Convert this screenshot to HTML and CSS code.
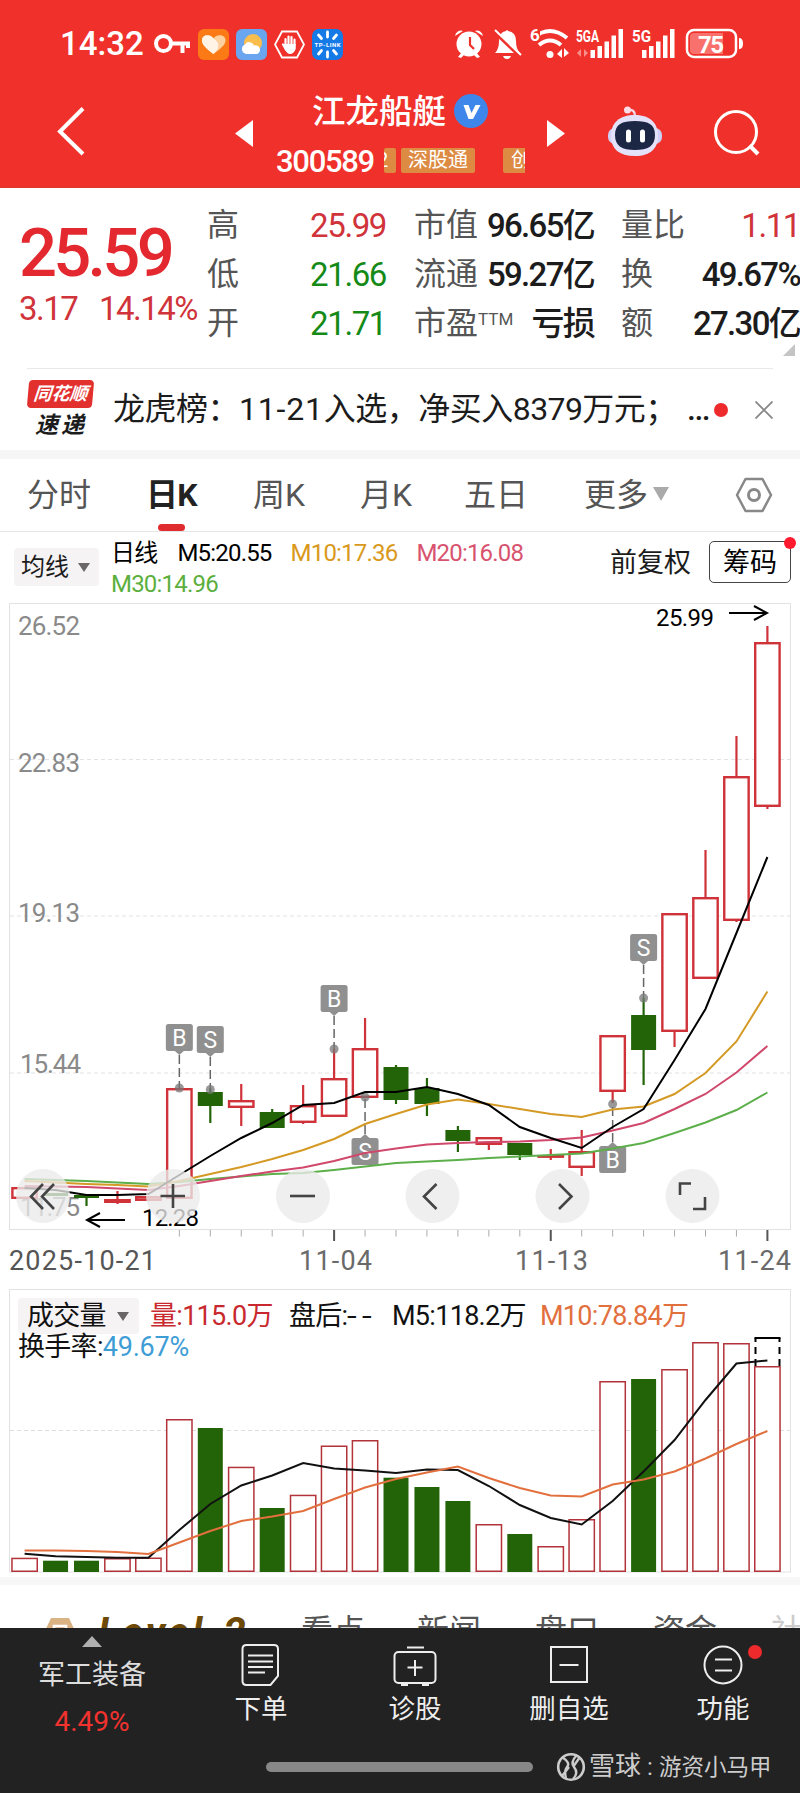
FILE: index.html
```html
<!DOCTYPE html>

<html lang="zh-CN">
    <head>
        <meta charset="utf-8" />
        <meta name="viewport" content="width=device-width, initial-scale=1.0">
        <title>江龙船艇</title>
        <link rel="stylesheet" href="styles.css">
    </head>
    <body>
        <div class="wrap">
            <div class="header">
                <div class="status">
                    <span class="time">14:32</span>
                    <svg class="s-key" width="36" height="31" viewBox="0 0 36 31">
                        <circle cx="9.500" cy="14.500" r="7.500" fill="none" stroke="#fff" stroke-width="4"/>
                        <path d="M17 14.500H36M28.500 15v9M34 15v4" fill="none" stroke="#fff" stroke-width="4"/>
                    </svg>
                    <svg class="s-app" width="31" height="31" viewBox="0 0 31 31">
                        <rect width="31" height="31" rx="6" fill="#fb7a16"/>
                        <path d="M15.500 25C9 20 4 16 4 11.500 4 5.500 12 4.500 15.500 9.500 19 4.500 27.500 5.500 27.500 11.500 27.500 16 22 20 15.500 25Z" fill="#fdd0a0"/>
                        <path d="M15.500 25C9 20 4 16 4 11.500 4 5.500 12 4.500 15.500 9.500 20 13 22 16 19 21Z" fill="#fff4e6"/>
                    </svg>
                    <svg class="s-app" width="31" height="31" viewBox="0 0 31 31">
                        <rect width="31" height="31" rx="6" fill="#6aa5ef"/>
                        <circle cx="17" cy="14" r="9" fill="#fbbd4c"/>
                        <path d="M10 25a5 5 0 0 1-1-9.500 5 5 0 0 1 9 1 4.500 4.500 0 0 1 3 8.500Z" fill="#fff"/>
                    </svg>
                    <svg class="s-app" width="31" height="31" viewBox="0 0 31 31">
                        <path d="M8 2.500H23L30 15.500 23 28.500H8L1 15.500Z" fill="none" stroke="#fff" stroke-width="1.800"/>
                        <path d="M11.500 17V10M14.500 16V7.500M17.500 16V8M20.500 17V10.500M9 15.500l3 5" fill="none" stroke="#fff" stroke-width="2.200" stroke-linecap="round"/>
                        <path d="M10.500 15h11.200v5q-2 5-5.700 5-3 0-5.500-5Z" fill="#fff"/>
                    </svg>
                    <svg class="s-app" width="31" height="31" viewBox="0 0 31 31">
                        <rect width="31" height="31" rx="7" fill="#1579e6"/>
                        <path d="M15.500 3v5M15.500 23v5M6.500 6l3 3.500M24.500 6l-3 3.500M6.500 25l3-3.500M24.500 25l-3-3.500" stroke="#fff" stroke-width="2.800" stroke-linecap="round"/>
                        <text x="15.500" y="17.800" class="tp" textLength="26">TP-LINK</text>
                    </svg>
                    <svg class="s-right" width="290" height="34" viewBox="453 27 290 34">
                        <g fill="#fff">
                            <circle cx="468" cy="44" r="12.500"/>
                            <path d="M454 36a6 6 0 0 1 8-5ZM482 36a6 6 0 0 0-8-5ZM457 57l4-5 3 2-4 4ZM479 57l-4-5-3 2 4 4Z"/>
                            <path d="M494 53q4-4 4-12 0-9 7-10 1-2 2 0 8 1 8 10 0 8 4 12ZM502 56h8q-1 3-4 3t-4-3Z"/>
                            <circle cx="549" cy="54.500" r="3.500"/>
                            <path d="M556 54l5-5v9ZM568 53l-5-5v9Z"/>
                            <path d="M589.500 50h4.500v8h-4.500ZM596.500 46h4.500v12h-4.500ZM603.500 41.500h4.500v16.500h-4.500ZM610.500 35.500h4.500v22.500h-4.500ZM617.500 29h4.500v29h-4.500Z"/>
                            <path d="M641 50h4.500v8h-4.500ZM648 46h4.500v12h-4.500ZM655 41.500h4.500v16.500h-4.500ZM662 35.500h4.500v22.500h-4.500ZM669 29h4.500v29h-4.500Z"/>
                            <path d="M738 38q4 0 4 5.500T738 49Z"/>
                        </g>
                        <path d="M576 53l4-4v8ZM587 53l-4-4v8Z" fill="#f98d88"/>
                        <path d="M469 37v8l4 4" fill="none" stroke="#ef312b" stroke-width="2.200"/>
                        <path d="M493 31l27 26" stroke="#ef312b" stroke-width="4"/>
                        <path d="M494 30l26 25" stroke="#fff" stroke-width="2"/>
                        <path d="M532 38q17-14 34 0M538 45q11-9 22 0" fill="none" stroke="#fff" stroke-width="4"/>
                        <rect x="528" y="27" width="11" height="14" fill="#ef312b"/>
                        <rect x="686" y="30" width="49" height="27" rx="7" fill="none" stroke="#fff" stroke-width="2.500"/>
                        <path d="M693 33h29v21h-29q-4 0-4-4V37q0-4 4-4Z" fill="#f8716c"/>
                        <text x="529" y="40.500" class="net" textLength="8">6</text>
                        <text x="575" y="42" class="net" textLength="23" lengthAdjust="spacingAndGlyphs">5GA</text>
                        <text x="631" y="42" class="net" textLength="19" lengthAdjust="spacingAndGlyphs">5G</text>
                        <text x="697" y="52.500" class="batt" textLength="26">75</text>
                    </svg>
                </div>
                <div class="nav">
                    <svg class="back" width="30" height="50" viewBox="0 0 30 50"><path d="M26 2.500L3 25.500 26 48" fill="none" stroke="#fff" stroke-width="4"/></svg>
                    <svg class="prev" width="18" height="27" viewBox="0 0 18 27"><path d="M18 0V27L0 13.500Z" fill="#fff"/></svg>
                    <div class="stock">
                        <div class="name">江龙船艇
                            <svg width="34" height="34" viewBox="0 0 34 34"><circle cx="17" cy="17" r="17" fill="#3e86ea"/><path d="M9.500 11h5l3 8 4-8h5L19 25h-4.500Z" fill="#fff"/></svg>
                        </div>
                        <div class="code">
                            <span class="num">300589</span>
                            <div class="tags"><span class="tag t1">2</span><span class="tag t2">深股通</span><span class="tag t3">创</span></div>
                        </div>
                    </div>
                    <svg class="next" width="18" height="27" viewBox="0 0 18 27"><path d="M0 0V27L18 13.500Z" fill="#fff"/></svg>
                    <svg class="robot" width="56" height="52" viewBox="0 0 56 52">
                        <path d="M21 4Q28 3 28 10" fill="none" stroke="#f4d5e6" stroke-width="2.500"/>
                        <circle cx="20.500" cy="4" r="3.500" fill="#fbdce8"/>
                        <rect x="1" y="22" width="54" height="16" rx="7" fill="#cfd0f7"/>
                        <path d="M28 9C44 9 51 18 51 30S44 50 28 50 4 43 4 30 12 9 28 9Z" fill="#e4e1fb"/>
                        <path d="M28 15c13 0 20 3 20 14s-7 15-20 15-20-4-20-15 7-14 20-14Z" fill="#1c2745"/>
                        <path d="M21.500 26v8M35.500 26v8" stroke="#fff" stroke-width="5" stroke-linecap="round"/>
                    </svg>
                    <svg class="search" width="46" height="46" viewBox="0 0 46 46"><circle cx="22" cy="22" r="20.500" fill="none" stroke="#fff" stroke-width="3"/><path d="M35.500 35.500l8.500 8.500" stroke="#fff" stroke-width="4"/></svg>
                </div>
            </div>

            <div class="quote">
                <div class="price">
                    <p class="now">25.59</p>
                    <p class="diff"><span>3.17</span><span>14.14%</span></p>
                </div>
                <div class="cells">
                    <span class="k">高</span><span class="v red">25.99</span>
                    <span class="k">市值</span><span class="v">96.65亿</span>
                    <span class="k">量比</span><span class="v red">1.11</span>
                    <span class="k">低</span><span class="v green">21.66</span>
                    <span class="k">流通</span><span class="v">59.27亿</span>
                    <span class="k">换</span><span class="v">49.67%</span>
                    <span class="k">开</span><span class="v green">21.71</span>
                    <span class="k">市盈<sup>TTM</sup></span><span class="v">亏损</span>
                    <span class="k">额</span><span class="v">27.30亿</span>
                </div>
                <span class="corner"></span>
            </div>

            <div class="news">
                <div class="news-logo">
                    <span class="logo-top">同花顺</span>
                    <span class="logo-btm">速递</span>
                </div>
                <p class="news-txt">龙虎榜：<span class="n1">11-21</span>入选，净买入<span class="n2">8379</span>万元；</p>
                <span class="dots">...</span>
                <span class="dot"></span>
                <svg width="18" height="18" viewBox="0 0 18 18"><path d="M.5.500l17 17M17.500.500l-17 17" stroke="#888" stroke-width="1.800"/></svg>
            </div>

            <div class="tabs">
                <span>分时</span>
                <span class="on">日K</span>
                <span>周K</span>
                <span>月K</span>
                <span>五日</span>
                <span>更多<i class="tri tri-l"></i></span>
                <svg width="38" height="36" viewBox="0 0 38 36"><path d="M10.500 2H27.500L36 18 27.500 34H10.500L2 18Z" fill="none" stroke="#888" stroke-width="2.500" stroke-linejoin="round"/><circle cx="19" cy="18" r="5.500" fill="none" stroke="#888" stroke-width="3"/></svg>
            </div>

            <div class="ma-bar">
                <span class="pill">均线<i class="tri"></i></span>
                <p class="ma">
                    <span class="c-day">日线</span><span class="c-m5">M5:20.55</span><span class="c-m10">M10:17.36</span><span class="c-m20">M20:16.08</span><br>
                    <span class="c-m30">M30:14.96</span>
                </p>
                <span class="fq">前复权</span>
                <span class="cm">筹码<i class="dot"></i></span>
            </div>

            <svg id="kline" class="kline" width="800" height="686" viewBox="0 603 800 686"></svg>

            <div class="vol">
                <svg id="volume" width="800" height="288" viewBox="0 1289 800 288"></svg>
                <div class="vol-head">
                    <p><span class="pill">成交量<i class="tri"></i></span><span class="v1">量:115.0万</span><span class="v2">盘后:<em>--</em></span><span class="v3">M5:118.2万</span><span class="v4">M10:78.84万</span></p>
                    <p class="hs">换手率:<span>49.67%</span></p>
                </div>
            </div>

            <div class="subtabs">
                <svg width="34" height="30" viewBox="0 0 34 30"><path d="M8 2H26L33 17 17 30 1 17Z" fill="#d9b384"/><path d="M11 10h12v7H11Z" fill="none" stroke="#fff" stroke-width="2.500"/></svg>
                <span class="level">Level-2</span>
                <span>看点</span>
                <span>新闻</span>
                <span>盘口</span>
                <span>资金</span>
                <span class="fade">社区</span>
            </div>

            <div class="footer">
                <div class="menu">
                    <div class="sector">
                        <i class="up"></i>
                        <span>军工装备</span>
                        <b>4.49%</b>
                    </div>
                    <div class="item">
                        <svg width="44" height="44" viewBox="0 0 44 44"><path d="M7.500 2H35q4 0 4 4V33L31.500 42H7.500q-4 0-4-4V6q0-4 4-4Z"/><path d="M9 12.500H34M9 18.500H34M9 24H34M9 29.500H26"/></svg>
                        <span>下单</span>
                    </div>
                    <div class="item">
                        <svg width="44" height="44" viewBox="0 0 44 44"><rect x="1.500" y="9" width="41" height="31" rx="4"/><path d="M14 4.500H31M22 17V33M14.500 24.500H29.500M8 42H15M29 42H36"/></svg>
                        <span>诊股</span>
                    </div>
                    <div class="item">
                        <svg width="44" height="44" viewBox="0 0 44 44"><rect x="4" y="4" width="36" height="35"/><path d="M12.500 22H31.500"/></svg>
                        <span>删自选</span>
                    </div>
                    <div class="item">
                        <svg width="44" height="44" viewBox="0 0 44 44"><circle cx="22" cy="22" r="18.500"/><path d="M14 16.500H31M14 27.500H31"/></svg>
                        <span>功能</span>
                        <i class="dot"></i>
                    </div>
                </div>
                <div class="home">
                    <i class="bar"></i>
                    <svg width="30" height="30" viewBox="0 0 30 30"><circle cx="15" cy="15" r="12.800" fill="none" stroke="#ccc" stroke-width="2.600"/><path d="M6 5q9 6 5 10-3 4-1 11M21 3q-7 7-3 12 5 6-1 12M6 24l7-9M17 15l7-10" fill="none" stroke="#ccc" stroke-width="2.400"/></svg>
                    <span class="xq">雪球</span><span class="colon">:</span><span class="who">游资小马甲</span>
                </div>
            </div>
        </div>
        <script src="chart.js"></script>
    </body>
</html>
```

FILE: styles.css
```css
* { margin: 0; padding: 0; box-sizing: border-box;}
body { font: 32px/1.2 Roboto, 'Noto Sans CJK SC', sans-serif; color: #1c1c1c; background: #fff;}
svg { display: block; flex: none;}
i, b, em { font-style: normal; font-weight: 400;}
.wrap { width: 800px; height: 1793px; overflow: hidden;}
.red { color: #d0333a;}
.green { color: #168a16;}
.dot { display: block; width: 14px; height: 14px; border-radius: 50%; background: #ee2a2c;}
.tri { display: inline-block; border: 6.5px solid transparent; border-top: 9px solid #6a6668; border-bottom: 0;}

.header { height: 188px; background: #f0312b; border-bottom: 1px solid #d8382f; color: #fff;}
.status { display: flex; align-items: center; height: 88px; padding-left: 60px;}
.status .time { width: 94px; font-size: 33px; font-weight: 500; line-height: 44px;}
.s-key { margin-right: 8px;}
.s-app { margin-right: 7px;}
.s-right { margin-left: 104px;}
.tp { font: 700 6px Roboto, sans-serif; fill: #fff; text-anchor: middle;}
.net { font: 700 17px Roboto, sans-serif; fill: #fff;}
.batt { font: 700 24px Roboto, sans-serif; fill: #fff;}
.nav { display: flex; height: 99px; padding-left: 57px;}
.back { margin: 18px 148px 0 0;}
.prev { margin: 32px 24px 0 0;}
.stock { width: 249px;}
.stock .name { display: flex; justify-content: space-between; height: 46px; padding-left: 35px; width: 211px; font-size: 33.500px; line-height: 48px; font-weight: 500; white-space: nowrap;}
.name svg { margin-top: 6px;}
.code { display: flex; height: 54px;}
.code .num { width: 108px; margin-left: -1px; font-size: 31px; line-height: 55px; font-weight: 500; letter-spacing: -1.300px;}
.tags { display: flex; width: 141px; height: 25px; margin-top: 14px; overflow: hidden; font-size: 20px; line-height: 25px;}
.tag { flex: none; background: #dd8a42; border-radius: 2px; text-align: center;}
.tag.t1 { width: 12px; margin-right: 5px; text-indent: -7px; text-align: left;}
.tag.t2 { width: 74px; margin-right: 28px;}
.tag.t3 { width: 30px; padding-left: 6px;}
.next { margin: 32px 42px 0 21px;}
.robot { margin: 18px 51px 0 0;}
.search { margin-top: 22px;}

.quote { position: relative; display: flex; height: 180px; padding-left: 19px;}
.price { width: 188px; color: #e3292f;}
.now { height: 92px; padding-top: 25px; font-size: 67px; line-height: 80px; font-weight: 500; letter-spacing: -3.800px;}
.diff { display: flex; justify-content: space-between; width: 178px; margin-top: 7px; color: #d0333a; font-size: 33px; line-height: 44px; letter-spacing: -1.500px;}
.cells { display: grid; grid-template-columns: 54px 125px 90px 118px 66px 140px; grid-auto-rows: 49px; padding-top: 13px; line-height: 49px; white-space: nowrap;}
.cells .k { color: #555;}
.cells .k:nth-child(6n+3) { margin-left: 28px;}
.cells .k:nth-child(6n+5) { margin-left: 27px;}
.cells .v { text-align: right; font-size: 33px; font-weight: 500; letter-spacing: -1.700px;}
.cells .v.red, .cells .v.green { font-weight: 400; letter-spacing: -1.400px;}
.cells sup { font-size: 17px; line-height: 1; vertical-align: 9px;}
.corner { position: absolute; right: 5px; top: 156px; border: 6.500px solid #c4c4c4; border-top-color: transparent; border-left-color: transparent;}

.news { display: flex; align-items: center; height: 82px; margin: 0 27px; border-top: 1px solid #e8e8e8;}
.news-logo { width: 86px; height: 60px; padding-left: 1px; font-style: italic; font-weight: 700;}
.logo-top { display: block; width: 65px; height: 28px; border-radius: 4px; background: #e2302f; color: #fff; font-size: 18px; line-height: 28px; text-align: center; transform: skewX(-5deg);}
.logo-btm { display: block; padding-left: 7px; font-size: 23px; line-height: 35px; letter-spacing: 3px;}
.news-txt { width: 574px; white-space: nowrap; letter-spacing: -.500px;}
.news-txt .n1 { letter-spacing: .800px;}
.news-txt .n2 { letter-spacing: -.600px;}
.dots { width: 27px; font-weight: 500; letter-spacing: -1.500px;}
.news .dot { margin-right: 27px;}

.tabs { display: grid; grid-template-columns: 119px 107px 107px 104px 120px 151px 38px; align-items: center; height: 82px; padding-left: 27px; border-top: 9px solid #f6f6f6; border-bottom: 1px solid #e6e6e6; color: #555; line-height: 72px; white-space: nowrap;}
.tabs .on { position: relative; color: #222; font-weight: 700; letter-spacing: -.800px;}
.tabs .on::after { content: ''; position: absolute; left: 12px; bottom: 0; width: 27px; height: 7px; border-radius: 4px; background: #e02b2f;}
.tabs svg { margin-top: -1px;}
.tri-l { border-width: 14px 8px 0; border-top-color: #aaa; margin-left: 5px; vertical-align: 5px;}

.ma-bar { display: flex; height: 71px; padding-left: 14px; font-size: 24px; white-space: nowrap;}
.pill { display: flex; align-items: center; justify-content: space-between; border-radius: 4px; background: #f6f3f5;}
.ma-bar .pill { width: 85px; height: 38px; margin-top: 16px; padding: 0 9px 0 7px;}
.ma { width: 511px; padding: 6px 0 0 12px; line-height: 31px; letter-spacing: -.800px; color: #000;}
.c-day { margin-right: 20px;}
.c-m5 { margin-right: 19px;}
.c-m10 { margin-right: 19px; color: #d9991c;}
.c-m20 { color: #d8536f;}
.c-m30 { color: #5caf3d;}
.fq { width: 99px; font-size: 27px; line-height: 62px;}
.cm { position: relative; width: 82px; height: 42px; margin-top: 9px; border: 1px solid #444; border-radius: 5px; font-size: 27px; line-height: 42px; text-align: center; color: #000;}
.cm .dot { position: absolute; right: -6px; top: -5px; width: 12px; height: 12px; background: #ff1a2e;}

.kline text { font-family: Roboto, sans-serif;}
.axis { font-size: 26px; fill: #8a8a8a;}
.date { font-size: 27px; fill: #6a6a6a;}
.date.first { fill: #555;}
.kline .peak { font-size: 24px; fill: #000;}
.kline .mark { font-size: 23px; fill: #fff; text-anchor: middle;}

.vol { display: grid;}
.vol > * { grid-area: 1 / 1;}
.vol-head { padding: 9px 0 0 18px; font-size: 27px; color: #111; white-space: nowrap;}
.vol-head p { display: flex; height: 36px; line-height: 36px; letter-spacing: -.700px;}
.vol-head .pill { width: 121px; padding: 0 10px 0 9px;}
.vol-head .hs { margin-top: -5px;}
.v1 { margin-left: 11px; width: 139px; color: #c9292e;}
.v2 { width: 103px;}
.v2 em { display: inline-block; transform: scaleX(1.300); transform-origin: 0 50%; letter-spacing: 4px;}
.v3 { width: 148px;}
.v4 { color: #e2703e;}
.hs span { color: #3f9dd6; letter-spacing: -.200px;}

.subtabs { display: grid; grid-template-columns: 55px 203px 116px 118px 118px 118px 30px; height: 51px; padding: 0 0 0 43px; border-top: 8px solid #f7f7f7; color: #555; line-height: 44px; overflow: hidden; white-space: nowrap;}
.subtabs span { padding-top: 24px;}
.subtabs svg { margin-top: 31px;}
.subtabs .level { font-size: 40px; font-style: italic; font-weight: 700; color: #6e4a08; padding-top: 26px; letter-spacing: 3px;}
.subtabs .fade { color: #ccc;}

.footer { height: 165px; background: #222; color: #eee;}
.menu { display: grid; grid-template-columns: 184px repeat(4, 154px); height: 122px; text-align: center; font-size: 27px;}
.sector { display: flex; flex-direction: column; align-items: center;}
.sector .up { margin-top: 8px; border: 10px solid transparent; border-bottom: 11px solid #b0b0b0; border-top: 0;}
.sector span { margin-top: 8px; line-height: 40px; color: #ddd;}
.sector b { margin-top: 10px; line-height: 34px; font-size: 28px; letter-spacing: 0; color: #f2322f;}
.item { position: relative; padding-top: 15px; font-size: 26.500px;}
.item svg { margin: 0 auto 4px; fill: none; stroke: #eee; stroke-width: 2;}
.item span { display: block; line-height: 36px;}
.item .dot { position: absolute; left: 102px; top: 17px;}
.home { display: flex; align-items: center; height: 34px; padding-left: 266px; font-size: 24px; color: #ccc;}
.home .bar { width: 267px; height: 10px; margin-right: 23px; border-radius: 5px; background: #888;}
.home .xq { margin-left: 3px; font-size: 26px;}
.home .colon { width: 18px; text-align: center;}
.home .who { font-size: 22.500px;}
```

FILE: chart.js
```js
var kline = document.getElementById('kline');
var volume = document.getElementById('volume');
var RED = '#cf3238', GREEN = '#236408';

// [涨跌, 实体上沿, 实体下沿, 影线上端, 影线下端]
var days = [
    ['r', 1187, 1199], ['g', 1193, 1196], ['g', 1195, 1198, 1195, 1206], ['r', 1199, 1203, 1191, 1204], ['r', 1196, 1201],
    ['r', 1088, 1199], ['g', 1092, 1106, 1088, 1123], ['r', 1100, 1108, 1084, 1126], ['g', 1112, 1128, 1109, 1128], ['r', 1105, 1123, 1085, 1124],
    ['r', 1078, 1117, 1049, 1078], ['r', 1048, 1098, 1018, 1048], ['g', 1067, 1100, 1065, 1104], ['g', 1088, 1104, 1078, 1116], ['g', 1130, 1141, 1126, 1152],
    ['r', 1137, 1145, 1137, 1150], ['g', 1143, 1155, 1143, 1160], ['r', 1155, 1157, 1149, 1160], ['r', 1151, 1168, 1130, 1176], ['r', 1035, 1092, 1035, 1103],
    ['g', 1015, 1050, 998, 1085], ['r', 913, 1032, 913, 1047], ['r', 897, 979, 850, 979], ['r', 776, 921, 736, 922], ['r', 642, 807, 626, 809]
];
var ma = {
    '#5caf4a': [1179, 1180, 1181, 1182.5, 1184, 1182, 1179, 1176.5, 1174, 1173, 1170, 1166.5, 1163, 1161.5, 1160, 1158, 1156.5, 1155, 1153.5, 1148.5, 1143, 1133, 1122.5, 1110, 1092.5],
    '#d0486b': [1186, 1186.5, 1187, 1188.5, 1190, 1186, 1181, 1176, 1171.5, 1167.5, 1161, 1153, 1148.5, 1144.5, 1143, 1142, 1141.5, 1140, 1137.5, 1130.5, 1123, 1109, 1094, 1072.5, 1046],
    '#d49a25': [1181, 1182.5, 1184, 1185, 1186.5, 1181, 1174, 1167, 1159, 1150, 1139, 1124, 1114, 1104.5, 1099.5, 1104, 1109, 1114, 1117, 1109.5, 1106.5, 1094, 1073, 1041.5, 991.5],
    '#000': [1188, 1190, 1195, 1195, 1194, 1175, 1156, 1138, 1123, 1105, 1103, 1092, 1092, 1087, 1094, 1105, 1127, 1138, 1148, 1127, 1109, 1060, 1009, 933, 857]
};
var vols = [1557.7, 1560.7, 1560.7, 1558, 1557.5, 1419, 1428, 1466.7, 1508, 1494.7, 1445.5, 1440, 1477.7, 1487, 1501, 1524, 1534, 1546, 1519, 1381, 1379, 1369, 1342, 1343, 1366];
var volMa = {
    '#111': [1553.7, 1556.3, 1557, 1557.7, 1557.7, 1530, 1504, 1485.5, 1475.5, 1463, 1468.5, 1470.5, 1473, 1469.5, 1470, 1486, 1505, 1518, 1524.5, 1501, 1471.5, 1440, 1400, 1363.5, 1360.5],
    '#e2703e': [1550.5, 1550.5, 1551, 1552, 1554, 1542.5, 1531, 1521, 1516.5, 1511, 1499, 1487.5, 1479, 1472.5, 1466.5, 1478, 1488, 1495.5, 1496.5, 1484.5, 1479.5, 1471.5, 1458.5, 1444, 1431]
};
// [第几根, 文字, 方块上沿, 圆点位置]
var marks = [[5, 'B', 1024, 1088], [6, 'S', 1026, 1089.5], [10, 'B', 985, 1049], [11, 'S', 1138, 1097], [19, 'B', 1146, 1104], [20, 'S', 934, 998]];

function cx(i) {
    return 24.6 + 30.95 * i;
}
function line(x1, y1, x2, y2, color, w, more) {
    return '<path d="M' + x1 + ' ' + y1 + 'L' + x2 + ' ' + y2 + '" stroke="' + color + '" stroke-width="' + w + '" ' + (more || '') + '/>';
}
function curve(list, color, w) {
    var pts = [];
    for (var i = 0; i < list.length; i++) {
        pts.push(cx(i) + ',' + list[i]);
    }
    return '<polyline points="' + pts.join(' ') + '" fill="none" stroke="' + color + '" stroke-width="' + w + '"/>';
}
function body(i, type, top, bottom, w) {
    if (type == 'g') {
        return '<rect x="' + (cx(i) - 12.5) + '" y="' + top + '" width="25" height="' + (bottom - top) + '" fill="' + GREEN + '"/>';
    }
    return '<rect x="' + (cx(i) - 13.4 + w / 2) + '" y="' + (top + w / 2) + '" width="' + (26.8 - w) + '" height="' + Math.max(bottom - top - w, 0.5) + '" fill="#fff" stroke="' + (w > 2 ? RED : '#b23339') + '" stroke-width="' + w + '"/>';
}
function label(x, y, cls, len, txt) {
    return '<text x="' + x + '" y="' + y + '" class="' + cls + '" textLength="' + len + '">' + txt + '</text>';
}
function drawMark(m) {
    var x = cx(m[0]), top = m[2], below = m[3] < top;
    var tip = below ? top - 4 : top + 31;
    var edge = below ? top + 0.5 : top + 26.5;
    return line(x, tip, x, m[3], '#666', 1.5, 'stroke-dasharray="9 4"') +
        '<circle cx="' + x + '" cy="' + m[3] + '" r="4.5" fill="#777" fill-opacity=".75"/>' +
        '<rect x="' + (x - 13.5) + '" y="' + top + '" width="27" height="27" rx="2.5" fill="#909090"/>' +
        '<path d="M' + (x - 5) + ' ' + edge + 'H' + (x + 5) + 'L' + x + ' ' + tip + 'Z" fill="#909090"/>' +
        '<text x="' + x + '" y="' + (top + 21.5) + '" class="mark">' + m[1] + '</text>';
}
function button(x, d) {
    return '<circle cx="' + x + '" cy="1196" r="27" fill="#ebebeb" fill-opacity=".78"/>' +
        '<path d="' + d + '" fill="none" stroke="#444" stroke-width="2.6"/>';
}
function drawKline() {
    var html = '<rect x="9.5" y="603.5" width="781" height="626" fill="#fff" stroke="#e2e2e2"/>';
    var i, d, color;
    [759.5, 916, 1073].forEach(function (y) {
        html += line(10, y, 790, y, '#e2e2e2', 1, 'stroke-dasharray="4 3"');
    });
    html += label(18, 635, 'axis', 62, '26.52') + label(18, 772, 'axis', 62, '22.83') + label(18, 922, 'axis', 62, '19.13') +
        label(20, 1072.5, 'axis', 61, '15.44') + label(20, 1215.5, 'axis', 60, '11.75');
    for (i = 0; i < days.length; i++) {
        d = days[i];
        color = d[0] == 'g' ? GREEN : RED;
        if (d[3]) {
            html += line(cx(i), d[3], cx(i), d[4], color, 2.2);
        }
        html += body(i, d[0], d[1], d[2], 2.4);
    }
    marks.forEach(function (m) {
        html += drawMark(m);
    });
    for (color in ma) {
        html += curve(ma[color], color, 2);
    }
    html += label(656, 626, 'peak', 58, '25.99') + '<path d="M729 613H766M754 606L767 613 754 620" fill="none" stroke="#000" stroke-width="2"/>';
    html += label(142, 1226, 'peak', 57, '12.28') + '<path d="M125 1220H87M100 1213L87 1220 100 1227" fill="none" stroke="#000" stroke-width="2"/>';
    html += button(43, 'M43 1184L31 1196.5 43 1209M54 1184L42 1196.5 54 1209');
    html += button(173, 'M160.500 1196H185M173 1184V1208');
    html += button(303, 'M290 1196H315');
    html += button(432.5, 'M436.500 1184L424 1196.500 436.500 1209');
    html += button(562.5, 'M559 1184L571.500 1196.500 559 1209');
    html += button(692.5, 'M680 1195V1183.500H691M705 1197V1209H693');
    for (i = 5; i < 25; i++) {
        html += i == 10 || i == 17 || i == 24 ? line(cx(i), 1230, cx(i), 1241, '#555', 2) : line(cx(i), 1230, cx(i), 1236.5, '#aaa', 1);
    }
    html += label(9, 1270, 'date first', 147, '2025-10-21') + label(299, 1270, 'date', 73, '11-04') +
        label(515, 1270, 'date', 73, '11-13') + label(718, 1270, 'date', 73, '11-24');
    kline.innerHTML = html;
}
function drawVolume() {
    var html = '<rect x="9.5" y="1289.5" width="781" height="282.5" fill="#fff" stroke="#e2e2e2"/>' +
        line(10, 1430.5, 790, 1430.5, '#ddd', 1, 'stroke-dasharray="4 3"');
    for (var i = 0; i < vols.length; i++) {
        html += body(i, days[i][0], vols[i], 1572, 1.5);
    }
    html += '<path d="M755.500 1366V1338M779.500 1366V1338" fill="none" stroke="#000" stroke-width="2" stroke-dasharray="7 5"/>' +
        line(754.5, 1338, 780.5, 1338, '#000', 2);
    for (var color in volMa) {
        html += curve(volMa[color], color, 2);
    }
    volume.innerHTML = html;
}
drawKline();
drawVolume();
```
